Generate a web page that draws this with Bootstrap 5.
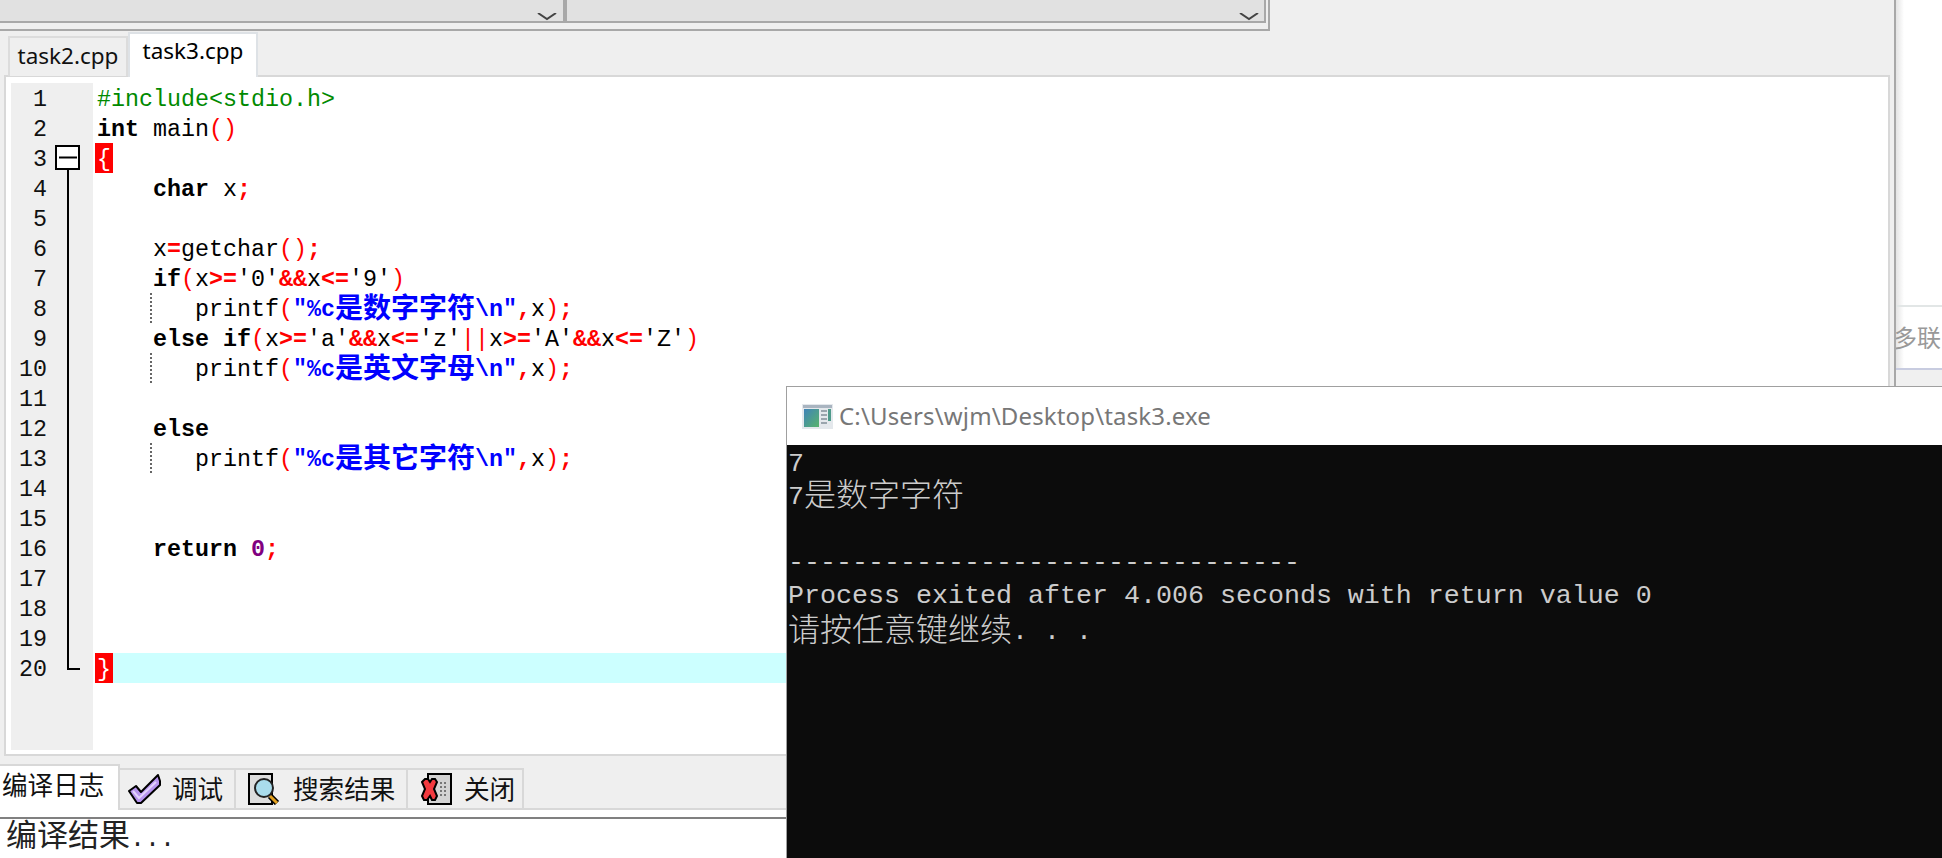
<!DOCTYPE html>
<html lang="zh">
<head>
<meta charset="utf-8">
<title>task3.cpp</title>
<link href="https://cdn.jsdelivr.net/npm/bootstrap@5.3.0/dist/css/bootstrap.min.css" rel="stylesheet">
<style>
html,body{height:858px;overflow:hidden;background:#fff}
.stage{width:1942px;height:858px;position:relative}
.appwin{width:1896px;height:858px;background:#efefef;border-right:2px solid #a8a8a8;position:relative;z-index:1}
.side-strip{width:46px;height:386px;overflow:hidden;background:linear-gradient(90deg,#e4e4e4,#fff 8px)}
.side-top{height:305px}
.side-text{height:65px;border-top:2px solid #e2e6e6;border-bottom:2px solid #c8cce0;font:24px/60px "Noto Sans CJK SC",sans-serif;color:#999;margin-left:-3px;white-space:nowrap}
.side-foot{height:16px;background:#f0f0f0}
.toolbox{width:1270px;height:31px;border-right:2px solid #a8a8a8;border-bottom:2px solid #a8a8a8;padding:0 2px 6px 0}
.toolin{height:23px;background:#e1e1e1;border-right:2px solid #a8a8a8;border-bottom:2px solid #a8a8a8}
.combo-a{width:563px;padding-right:6px}
.combo-b{padding-right:5px}
.combo-sep{width:4px;background:#a8a8a8}
.doc-tabs{height:46px;margin-bottom:-2px;padding-left:8px;border:0;position:relative;z-index:2}
.doc-tabs .nav-link{font:22.5px/36px "Noto Sans",sans-serif;color:#111;border:2px solid #dcdcdc;border-radius:0;background:#efefef;margin:0;padding:0;text-align:center}
.tab-off{width:120px;height:40px;margin-top:5px!important;border-bottom:0!important}
.doc-tabs .nav-link.active{width:130px;height:45px;margin-top:1px;background:#fff;border-bottom:0;line-height:34px}
.frame{margin:0 4px;height:681px;border:2px solid #d8d8d8;background:#fff;padding:6px 0 4px 5px}
.gutter{width:82px;height:667px;background:#efefef;position:relative;padding-right:46px;flex:none}
.num{height:30px;text-align:right;font:23.33px/35px "Liberation Mono",monospace;color:#111}
.foldmark{position:absolute;left:44px;top:62px}
.codebox{padding-left:2px;flex:1;font:23.33px/35px "Liberation Mono","Noto Sans CJK SC",monospace;color:#000}
.cline{height:30px;white-space:pre;padding-left:2px}
.cur{background:#ccffff}
.guide{background:repeating-linear-gradient(#666 0 2px,transparent 2px 4px) 55px 0/2px 100% no-repeat}
.kw{font-weight:700}
.pp{color:#008a00}
.op{color:#f00;font-weight:700}
.par{color:#f00}
.st{color:#00f;font-weight:700}
.nb{color:#800080;font-weight:700}
.hanz{font-family:"Noto Sans CJK SC",sans-serif;font-size:28px;line-height:0;font-weight:700;vertical-align:-2px}
.brace{background:#f00;color:#fff;padding:0 2px;margin-left:-2px;display:inline-block;height:30px;vertical-align:top}
.log-tabs{height:54px;border:0;background:#efefef;border-bottom:2px solid #d8d8d8;overflow:visible}
.log-tabs .nav-link{height:40px;margin-top:12px;padding:0 0 3px;border:2px solid #d8d8d8;border-left:0;border-bottom:0;border-radius:0;background:#efefef;color:#111;font:25.6px/32px "Noto Sans CJK SC",sans-serif;display:flex;align-items:center;white-space:nowrap}
.log-tabs .nav-link.active{width:120px;height:46px;margin-top:8px;background:#fff;padding:2px 0 0 2px;border-bottom:0;position:relative;z-index:2;align-items:flex-start}
.ltab-dbg{width:116px}.ltab-find{width:172px}.ltab-close{width:116px}
.ltab-ico{flex:none;position:relative;top:1px}
.ltab-dbg .ltab-ico{margin:0 11px 0 8px}
.ltab-find .ltab-ico{margin:0 13px 0 12px}
.ltab-close .ltab-ico{margin:0 12px 0 13px}
.log-gap{height:7px;background:#fff}
.log-out{height:41px;background:#fff;border-top:2px solid #808080;padding-left:6px;font:31px/28px "Noto Sans CJK SC",sans-serif;color:#222}
.log-dots{font:25px/28px "Liberation Mono",monospace}
.conwin{position:absolute;left:786px;top:386px;right:0;bottom:0;z-index:5;border-left:1px solid #a0a0a0;border-top:1px solid #a0a0a0;background:#fff}
.contitle{height:58px;padding-left:15px;gap:6px;font:24px/1 "Noto Sans",sans-serif;color:#777;letter-spacing:.15px}
.conbody{height:413px;background:#0c0c0c;color:#ccc;padding:3px 0 0 1px;font:26.67px/33px "Liberation Mono","Noto Sans CJK SC",monospace}
.conline{height:33px;white-space:pre}
.conhan{font-family:"Noto Sans CJK SC",sans-serif;font-size:32px;line-height:0;font-weight:300;vertical-align:-2px}
.conlast{padding-top:3px}
</style>
</head>
<body>
<div class="stage d-flex">
  <div class="appwin d-flex flex-column flex-shrink-0">
    <div class="toolbox">
      <div class="toolin d-flex">
        <div class="combo-a d-flex justify-content-end align-items-end"><svg width="20" height="8" viewBox="0 0 20 8"><path d="M1 0 10 6 19 0" fill="none" stroke="#444" stroke-width="2"/></svg></div>
        <div class="combo-sep"></div>
        <div class="combo-b flex-fill d-flex justify-content-end align-items-end"><svg width="20" height="8" viewBox="0 0 20 8"><path d="M1 0 10 6 19 0" fill="none" stroke="#444" stroke-width="2"/></svg></div>
      </div>
    </div>
    <ul class="nav nav-tabs doc-tabs">
      <li class="nav-item"><a class="nav-link tab-off" href="#">task2.cpp</a></li>
      <li class="nav-item"><a class="nav-link active" href="#">task3.cpp</a></li>
    </ul>
    <div class="frame d-flex">
      <div class="gutter">
        <div class="num">1</div><div class="num">2</div><div class="num">3</div><div class="num">4</div><div class="num">5</div><div class="num">6</div><div class="num">7</div><div class="num">8</div><div class="num">9</div><div class="num">10</div><div class="num">11</div><div class="num">12</div><div class="num">13</div><div class="num">14</div><div class="num">15</div><div class="num">16</div><div class="num">17</div><div class="num">18</div><div class="num">19</div><div class="num">20</div>
        <svg class="foldmark" width="26" height="526" viewBox="0 0 26 526">
          <rect x="1" y="1" width="23" height="23" fill="#fff" stroke="#000" stroke-width="2"/>
          <path d="M4 12.500H22" stroke="#000" stroke-width="2"/>
          <path d="M13 24V524H25" fill="none" stroke="#000" stroke-width="2"/>
        </svg>
      </div>
      <div class="codebox">
<div class="cline"><span class="pp">#include&lt;stdio.h&gt;</span></div>
<div class="cline"><span class="kw">int</span> main<span class="par">()</span></div>
<div class="cline"><span class="brace">{</span></div>
<div class="cline">    <span class="kw">char</span> x<span class="op">;</span></div>
<div class="cline"></div>
<div class="cline">    x<span class="op">=</span>getchar<span class="par">()</span><span class="op">;</span></div>
<div class="cline">    <span class="kw">if</span><span class="par">(</span>x<span class="op">&gt;=</span>'0'<span class="op">&amp;&amp;</span>x<span class="op">&lt;=</span>'9'<span class="par">)</span></div>
<div class="cline guide">       printf<span class="par">(</span><span class="st">"%c<span class="hanz">是数字字符</span>\n"</span><span class="op">,</span>x<span class="par">)</span><span class="op">;</span></div>
<div class="cline">    <span class="kw">else</span> <span class="kw">if</span><span class="par">(</span>x<span class="op">&gt;=</span>'a'<span class="op">&amp;&amp;</span>x<span class="op">&lt;=</span>'z'<span class="par">||</span>x<span class="op">&gt;=</span>'A'<span class="op">&amp;&amp;</span>x<span class="op">&lt;=</span>'Z'<span class="par">)</span></div>
<div class="cline guide">       printf<span class="par">(</span><span class="st">"%c<span class="hanz">是英文字母</span>\n"</span><span class="op">,</span>x<span class="par">)</span><span class="op">;</span></div>
<div class="cline"></div>
<div class="cline">    <span class="kw">else</span></div>
<div class="cline guide">       printf<span class="par">(</span><span class="st">"%c<span class="hanz">是其它字符</span>\n"</span><span class="op">,</span>x<span class="par">)</span><span class="op">;</span></div>
<div class="cline"></div>
<div class="cline"></div>
<div class="cline">    <span class="kw">return</span> <span class="nb">0</span><span class="op">;</span></div>
<div class="cline"></div>
<div class="cline"></div>
<div class="cline"></div>
<div class="cline cur"><span class="brace">}</span></div>
      </div>
    </div>
    <ul class="nav log-tabs">
      <li class="nav-item"><a class="nav-link active" href="#">编译日志</a></li>
      <li class="nav-item"><a class="nav-link ltab-dbg" href="#">
        <svg class="ltab-ico" width="33" height="31" viewBox="0 0 33 31"><path d="M1 18 8 13 13 19 30 2 32 8 32 12 13 30 9 30Z" fill="#b795ee" stroke="#000" stroke-width="2" stroke-linejoin="round"/><path d="M5 18 11 25 28 9" fill="none" stroke="#e2d3fb" stroke-width="2"/></svg>调试</a></li>
      <li class="nav-item"><a class="nav-link ltab-find" href="#">
        <svg class="ltab-ico" width="32" height="32" viewBox="0 0 32 32"><rect x="1" y="1" width="23" height="30" fill="#ddd" stroke="#000" stroke-width="2"/><path d="M22 23 29 30" stroke="#000" stroke-width="6"/><path d="M22 23 29 30" stroke="#e3a11f" stroke-width="3"/><circle cx="16" cy="15" r="9" fill="#a9dcec" stroke="#222" stroke-width="2"/></svg>搜索结果</a></li>
      <li class="nav-item"><a class="nav-link ltab-close" href="#">
        <svg class="ltab-ico" width="31" height="32" viewBox="0 0 31 32"><rect x="7" y="1" width="23" height="30" fill="#d4d4d4" stroke="#000" stroke-width="2"/><path d="M19 10H26M19 14H26M19 18H26M19 22H26" stroke="#777" stroke-width="2" stroke-dasharray="2 2"/><path d="M1 9 4 6H7L9 9 11 6H14L16 9 13 16 16 23 14 27H11L9 23 6 27H3L1 23 4 16Z" fill="#f23a3f" stroke="#000" stroke-width="2"/></svg>关闭</a></li>
    </ul>
    <div class="log-gap"></div>
    <div class="log-out">编译结果<span class="log-dots">...</span></div>
  </div>
  <div class="side-strip flex-fill">
    <div class="side-top"></div>
    <div class="side-text">多联系</div>
    <div class="side-foot"></div>
  </div>
  <div class="conwin">
    <div class="contitle d-flex align-items-center">
      <svg width="31" height="25" viewBox="0 0 31 25"><rect width="31" height="25" fill="#e4e8ec"/><rect x="1" y="1" width="29" height="3" fill="#a9b4c0"/><defs><linearGradient id="cg" x1="0" y1="0" x2="1" y2="1"><stop offset="0" stop-color="#3f83b8"/><stop offset="1" stop-color="#58b46c"/></linearGradient></defs><rect x="2" y="5" width="15" height="18" fill="url(#cg)"/><path d="M19 7H25M19 11H25M19 15H25M19 19H25" stroke="#9aa5ad" stroke-width="2"/><rect x="26" y="5" width="3" height="12" fill="#4e9a8a"/></svg>
      <span>C:\Users\wjm\Desktop\task3.exe</span>
    </div>
    <div class="conbody">
      <div class="conline">7</div>
      <div class="conline">7<span class="conhan">是数字字符</span></div>
      <div class="conline"></div>
      <div class="conline">--------------------------------</div>
      <div class="conline">Process exited after 4.006 seconds with return value 0</div>
      <div class="conline conlast"><span class="conhan">请按任意键继续</span>. . .</div>
    </div>
  </div>
</div>
<script src="https://cdn.jsdelivr.net/npm/bootstrap@5.3.0/dist/js/bootstrap.bundle.min.js"></script>
</body>
</html>
